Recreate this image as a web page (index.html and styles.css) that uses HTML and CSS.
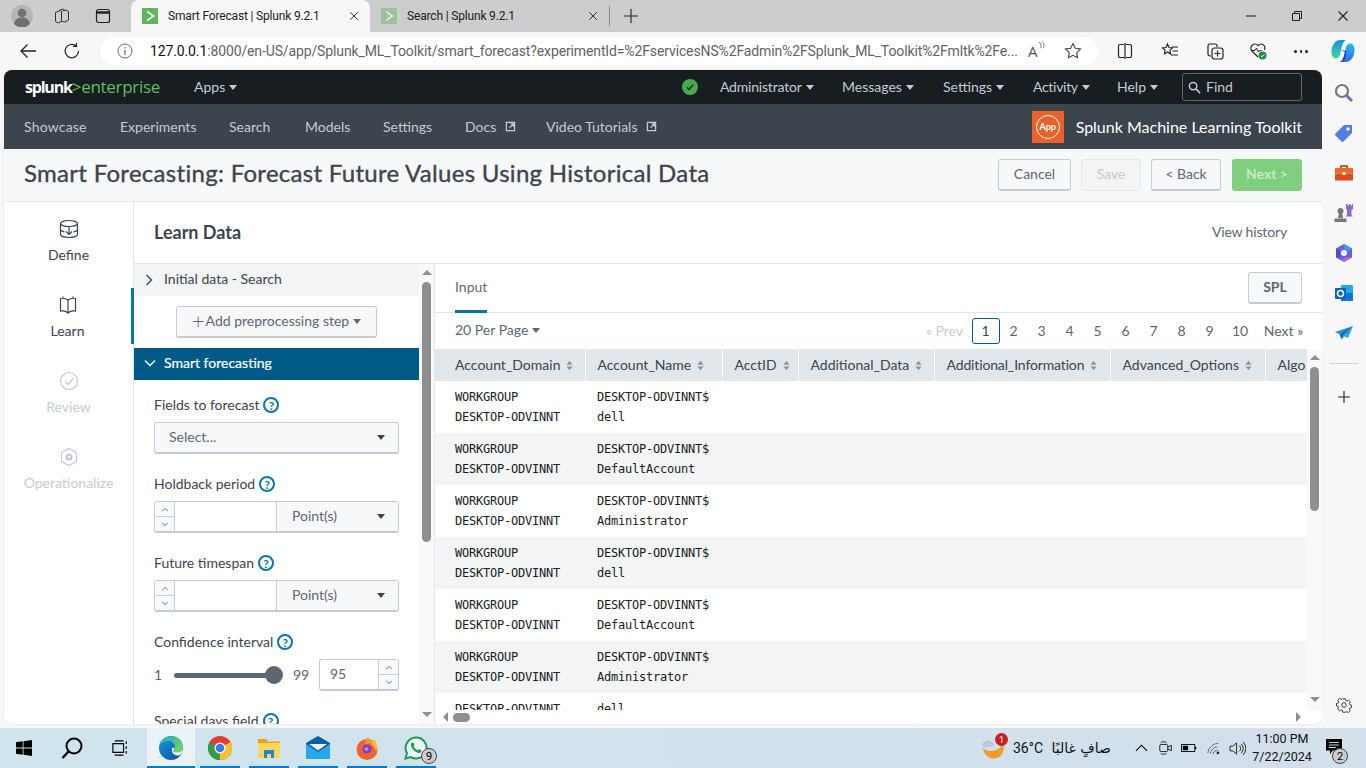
FILE: index.html
```html
<!DOCTYPE html>
<html lang="en">
<head>
<meta charset="utf-8">
<title>Smart Forecast | Splunk 9.2.1</title>
<link rel="stylesheet" href="styles.css">
</head>
<body>
<svg class="defs" width="0" height="0">
  <symbol id="sort" viewBox="0 0 8 12"><path d="M4 .5 7.5 5H.5zM4 11.5.5 7h7z" fill="#8a939c"/></symbol>
  <symbol id="ext" viewBox="0 0 12 12"><path d="M1.5 1.5h9v9h-9z M1.5 3.5v7h7" fill="none" stroke="#c3cbd4" stroke-width="1.3"/><path d="M5 7.5 9 3.2M6 3h3.2v3.2" fill="none" stroke="#c3cbd4" stroke-width="1.3"/></symbol>
  <symbol id="close" viewBox="0 0 12 12"><path d="M1.5 1.5l9 9M10.5 1.5l-9 9" stroke="#222" stroke-width="1.1" fill="none"/></symbol>
  <symbol id="fav" viewBox="0 0 16 16"><rect width="16" height="16" fill="#5cb85c"/><path d="M5 3.5 11.5 8 5 12.5" fill="none" stroke="#fff" stroke-width="1.8"/></symbol>
  <symbol id="up" viewBox="0 0 10 6"><path d="M1.5 5 5 1.5 8.500 5" fill="none" stroke="#6b7580" stroke-width="1.2"/></symbol>
  <symbol id="down" viewBox="0 0 10 6"><path d="M1.500 1 5 4.500 8.500 1" fill="none" stroke="#6b7580" stroke-width="1.2"/></symbol>
</svg>

<div class="tabbar">
  <div class="tb-left">
    <svg class="ic22" viewBox="0 0 22 22"><circle cx="11" cy="11" r="11" fill="#b5b5b5"/><circle cx="11" cy="8" r="4.300" fill="#6f6f6f"/><path d="M3 19c1-5 4-6.500 8-6.500s7 1.500 8 6.500a11 11 0 0 1-16 0" fill="#6f6f6f"/></svg>
    <svg class="ic16 gap-workspaces" viewBox="0 0 16 16"><path d="M1.500 4.500 6 2.500l1.500 1v10L4.500 15l-3-1.500z M5 2.500 9 1l1.500 1v.8 M8.500 3 12 2l2.500 1.500v8.500L11 14l-3.500-.5" fill="none" stroke="#333" stroke-width="1"/></svg>
    <svg class="ic16 gap-tabs" viewBox="0 0 16 16"><rect x="1.500" y="1.500" width="13" height="13" rx="2" fill="none" stroke="#222" stroke-width="1.200"/><path d="M1.500 4.500h13" stroke="#222" stroke-width="2.500"/></svg>
  </div>
  <div class="tab active">
    <svg class="fav" viewBox="0 0 16 16"><use href="#fav"/></svg>
    <span class="tab-title">Smart Forecast | Splunk 9.2.1</span>
    <svg class="tab-x" viewBox="0 0 12 12"><use href="#close"/></svg>
  </div>
  <div class="tab">
    <svg class="fav faded" viewBox="0 0 16 16"><use href="#fav"/></svg>
    <span class="tab-title">Search | Splunk 9.2.1</span>
    <svg class="tab-x" viewBox="0 0 12 12"><use href="#close"/></svg>
  </div>
  <span class="tab-sep"></span>
  <svg class="newtab" viewBox="0 0 14 14"><path d="M7 0v14M0 7h14" stroke="#222" stroke-width="1.100"/></svg>
  <div class="winctl">
    <svg class="wc" viewBox="0 0 12 12"><path d="M1 6h10" stroke="#222" stroke-width="1.100"/></svg>
    <svg class="wc" viewBox="0 0 12 12"><path d="M1.500 3.500h7v7h-7zM3.500 3.500v-2h7v7h-2" fill="none" stroke="#222" stroke-width="1"/></svg>
    <svg class="wc" viewBox="0 0 12 12"><use href="#close"/></svg>
  </div>
</div>

<div class="toolbar">
  <svg class="tool back" viewBox="0 0 18 18"><path d="M17 9H2M8.500 2.500 2 9l6.500 6.500" fill="none" stroke="#222" stroke-width="1.300"/></svg>
  <svg class="tool reload" viewBox="0 0 18 18"><path d="M15.500 9a6.700 6.700 0 1 1-2.300-5M13.500 1v3.500H10" fill="none" stroke="#222" stroke-width="1.200"/></svg>
  <div class="addr">
    <svg class="info" viewBox="0 0 16 16"><circle cx="8" cy="8" r="7" fill="none" stroke="#666" stroke-width="1"/><path d="M8 7v5M8 4v1.500" stroke="#666" stroke-width="1.200"/></svg>
    <span class="url"><b>127.0.0.1</b>:8000/en-US/app/Splunk_ML_Toolkit/smart_forecast?experimentId=%2FservicesNS%2Fadmin%2FSplunk_ML_Toolkit%2Fmltk%2Fe...</span>
    <span class="aloud">A<svg class="aloud-w" viewBox="0 0 8 10"><path d="M1 1c2.500 1 3 5 2 7M4 0c3 2 3.500 6 2 8" fill="none" stroke="#555" stroke-width=".9"/></svg></span>
    <svg class="star" viewBox="0 0 18 18"><path d="M9 1.500l2.300 4.800 5.200.7-3.800 3.600.9 5.200L9 13.300l-4.600 2.500.9-5.200L1.500 7l5.200-.7z" fill="none" stroke="#444" stroke-width="1.100"/></svg>
  </div>
  <div class="tools">
    <svg class="tool" viewBox="0 0 18 18"><path d="M8 2.500H4a1.500 1.500 0 0 0-1.500 1.500v10A1.500 1.500 0 0 0 4 15.500h4M10 2.500h4A1.500 1.500 0 0 1 15.500 4v10a1.500 1.500 0 0 1-1.500 1.500h-4M9 1v16" fill="none" stroke="#222" stroke-width="1.200"/></svg>
    <svg class="tool" viewBox="0 0 18 18"><path d="M6.500 2l1.500 3.500 3.500.4-2.600 2.500.7 3.600L6.500 10 3.400 11.900l.7-3.600L1.500 5.900 5 5.500z" fill="none" stroke="#222" stroke-width="1.100"/><path d="M11 5h6M11.500 9H17M10 13h7" stroke="#222" stroke-width="1.200"/></svg>
    <svg class="tool" viewBox="0 0 18 18"><path d="M5 14H4a2 2 0 0 1-2-2V4a2 2 0 0 1 2-2h5a2 2 0 0 1 2 2v1" fill="none" stroke="#222" stroke-width="1.200"/><rect x="6" y="6" width="11" height="11" rx="2.500" fill="none" stroke="#222" stroke-width="1.200"/><path d="M11.500 8.500v6M8.500 11.500h6" stroke="#222" stroke-width="1.200"/></svg>
    <svg class="tool t-health" viewBox="0 0 18 18"><path d="M9 15 2.500 8.500C.5 5.500 3 2 6 2c1.300 0 2.300.7 3 1.700C9.700 2.700 10.700 2 12 2c3 0 5 3.500 3.500 6" fill="none" stroke="#222" stroke-width="1.200"/><path d="M3 8.500h3l1.500-2.500 2 4 1-1.500h2" fill="none" stroke="#222" stroke-width="1"/><circle cx="13.500" cy="13.500" r="4" fill="#2a8a3e"/><path d="M11.700 13.500l1.300 1.300 2.300-2.500" fill="none" stroke="#fff" stroke-width="1"/></svg>
    <span class="dots"><i></i><i></i><i></i></span>
    <svg class="copilot" viewBox="0 0 24 24"><defs><linearGradient id="cpa" x1="0" y1="0" x2="0" y2="1"><stop offset="0" stop-color="#1a8fe0"/><stop offset="1" stop-color="#3fd8a0"/></linearGradient><linearGradient id="cpb" x1="0" y1="0" x2="0" y2="1"><stop offset="0" stop-color="#27b8f2"/><stop offset="1" stop-color="#2f6fe6"/></linearGradient></defs><path d="M9 1h6c-2.500 1-3.500 4-4.500 8L9 16c-.5 2-2.500 3.500-4.500 3.500C2 19.500.5 16.500.5 13 .5 7 4 1 9 1z" fill="url(#cpa)"/><path d="M15 23H9c2.500-1 3.500-4 4.500-8L15 8c.5-2 2.500-3.500 4.500-3.500 2.500 0 4 3 4 6.500 0 6-3.500 12-8.500 12z" fill="url(#cpb)"/><path d="M10 11l4 2-1 4c-.5 2-2 5-4 6 2 .3 4-1 5-3l1.500-8z" fill="#1b3fc0"/></svg>
  </div>
</div>

<div class="main">
  <div class="app">
    <header class="hdr">
      <div class="logo">splunk<span class="logo-g">&gt;enterprise</span></div>
      <span class="hm apps">Apps<i class="caret lt"></i></span>
      <div class="hdr-right">
        <svg class="ok" viewBox="0 0 16 16"><circle cx="8" cy="8" r="8" fill="#4aa84f"/><path d="M4.800 8.300 7 10.500l4.200-4.700" fill="none" stroke="#12301a" stroke-width="1.300"/></svg>
        <span class="hm m-admin">Administrator<i class="caret lt"></i></span>
        <span class="hm m-msg">Messages<i class="caret lt"></i></span>
        <span class="hm m-set">Settings<i class="caret lt"></i></span>
        <span class="hm m-act">Activity<i class="caret lt"></i></span>
        <span class="hm m-help">Help<i class="caret lt"></i></span>
        <div class="find"><svg class="find-i" viewBox="0 0 14 14"><circle cx="5.500" cy="5.500" r="4" fill="none" stroke="#c3cbd4" stroke-width="1.600"/><path d="M8.500 8.500 13 13" stroke="#c3cbd4" stroke-width="1.800"/></svg><span class="find-t">Find</span></div>
      </div>
    </header>
    <nav class="nav">
      <span class="ni n1">Showcase</span>
      <span class="ni n2">Experiments</span>
      <span class="ni n3">Search</span>
      <span class="ni n4">Models</span>
      <span class="ni n5">Settings</span>
      <span class="ni n6">Docs<svg class="ext" viewBox="0 0 12 12"><use href="#ext"/></svg></span>
      <span class="ni n7">Video Tutorials<svg class="ext" viewBox="0 0 12 12"><use href="#ext"/></svg></span>
      <div class="nav-right">
        <span class="appicon"><span class="appicon-in">App</span></span>
        <span class="apptitle">Splunk Machine Learning Toolkit</span>
      </div>
    </nav>
    <div class="titlebar">
      <h1 class="title">Smart Forecasting: Forecast Future Values Using Historical Data</h1>
      <div class="actions">
        <span class="btn b-cancel">Cancel</span>
        <span class="btn b-save">Save</span>
        <span class="btn b-back">&lt; Back</span>
        <span class="btn b-next">Next &gt;</span>
      </div>
    </div>
    <div class="body">
      <aside class="steps">
        <div class="step">
          <svg class="step-i" viewBox="0 0 20 20"><ellipse cx="10" cy="4.500" rx="8.500" ry="3" fill="none" stroke="#3c444d" stroke-width="1.200"/><path d="M1.500 4.500v11c0 1.700 3.800 3 8.500 3s8.500-1.300 8.500-3v-11M1.500 10c0 1.700 2 2.500 4 2.800M18.500 10c0 1.700-2 2.500-4 2.800M10 8v7M7 12.500l3 3 3-3" fill="none" stroke="#3c444d" stroke-width="1.200"/></svg>
          <span>Define</span>
        </div>
        <div class="step on">
          <svg class="step-i" viewBox="0 0 20 20"><path d="M10 5 C8 3.500 5 3 2.500 3.500V16c2.500-.5 5.500 0 7.500 2 2-2 5-2.500 7.500-2V3.500C15 3 12 3.500 10 5zM10 5v13M5 1.500v2M15 1.500v2" fill="none" stroke="#3c444d" stroke-width="1.200"/></svg>
          <span>Learn</span>
        </div>
        <div class="step off">
          <svg class="step-i" viewBox="0 0 20 20"><circle cx="10" cy="10" r="8.500" fill="none" stroke="#c3cbd4" stroke-width="1.200"/><path d="M6 10.500l3 3 5.500-6.500" fill="none" stroke="#c3cbd4" stroke-width="1.200"/></svg>
          <span>Review</span>
        </div>
        <div class="step off">
          <svg class="step-i" viewBox="0 0 20 20"><path d="M10 1.500l7.500 4.200v8.600L10 18.500l-7.500-4.200V5.700z" fill="none" stroke="#c3cbd4" stroke-width="1.200"/><circle cx="10" cy="10" r="3.500" fill="#c3cbd4"/><circle cx="10" cy="10" r="1.200" fill="#fff"/></svg>
          <span>Operationalize</span>
        </div>
      </aside>
      <section class="learn">
        <div class="learn-head">
          <h2 class="learn-title">Learn Data</h2>
          <span class="history">View history</span>
        </div>
        <div class="split">
          <div class="left">
            <div class="acc">
              <div class="acc-row"><svg class="chev" viewBox="0 0 8 12"><path d="M1.500 1 6.500 6l-5 5" fill="none" stroke="#3c444d" stroke-width="1.300"/></svg>Initial data - Search</div>
              <div class="add-wrap"><span class="add"><span class="plus">+</span>Add preprocessing step<i class="caret"></i></span></div>
              <div class="acc-row open"><svg class="chev wide" viewBox="0 0 12 8"><path d="M1 1.500l5 5 5-5" fill="none" stroke="#fff" stroke-width="1.300"/></svg>Smart forecasting</div>
              <div class="form">
                <div class="field">
                  <label class="lbl">Fields to forecast<span class="help">?</span></label>
                  <div class="sel"><span>Select...</span><i class="caret dk"></i></div>
                </div>
                <div class="field">
                  <label class="lbl">Holdback period<span class="help">?</span></label>
                  <div class="grp">
                    <span class="spin"><span class="sp"><svg viewBox="0 0 10 6"><use href="#up"/></svg></span><span class="sp"><svg viewBox="0 0 10 6"><use href="#down"/></svg></span></span>
                    <span class="inp"></span>
                    <span class="unit">Point(s)<i class="caret dk"></i></span>
                  </div>
                </div>
                <div class="field">
                  <label class="lbl">Future timespan<span class="help">?</span></label>
                  <div class="grp">
                    <span class="spin"><span class="sp"><svg viewBox="0 0 10 6"><use href="#up"/></svg></span><span class="sp"><svg viewBox="0 0 10 6"><use href="#down"/></svg></span></span>
                    <span class="inp"></span>
                    <span class="unit">Point(s)<i class="caret dk"></i></span>
                  </div>
                </div>
                <div class="field">
                  <label class="lbl">Confidence interval<span class="help">?</span></label>
                  <div class="slider-row">
                    <span class="s-min">1</span>
                    <span class="track"><span class="thumb"></span></span>
                    <span class="s-max">99</span>
                    <span class="grp num"><span class="numval">95</span><span class="spin r"><span class="sp"><svg viewBox="0 0 10 6"><use href="#up"/></svg></span><span class="sp"><svg viewBox="0 0 10 6"><use href="#down"/></svg></span></span></span>
                  </div>
                </div>
                <div class="field">
                  <label class="lbl">Special days field<span class="help">?</span></label>
                </div>
              </div>
            </div>
            <div class="vbar lbar"><i class="arr au"></i><span class="thumbv l"></span><span class="fill"></span><i class="arr ad"></i></div>
          </div>
          <div class="right">
            <div class="tabs">
              <span class="tab-input">Input</span>
              <span class="spl">SPL</span>
            </div>
            <div class="pager">
              <span class="perpage">20 Per Page<i class="caret"></i></span>
              <div class="pages">
                <span class="pg prev">« Prev</span>
                <span class="pg cur">1</span>
                <span class="pg">2</span><span class="pg">3</span><span class="pg">4</span><span class="pg">5</span><span class="pg">6</span><span class="pg">7</span><span class="pg">8</span><span class="pg">9</span>
                <span class="pg ten">10</span>
                <span class="pg nxt">Next »</span>
              </div>
            </div>
            <div class="tbl-area">
              <div class="tbl-clip">
                <table class="tbl">
                  <thead>
                    <tr>
                      <th class="c1">Account_Domain<svg class="sort" viewBox="0 0 8 12"><use href="#sort"/></svg></th>
                      <th class="c2">Account_Name<svg class="sort" viewBox="0 0 8 12"><use href="#sort"/></svg></th>
                      <th class="c3">AcctID<svg class="sort" viewBox="0 0 8 12"><use href="#sort"/></svg></th>
                      <th class="c4">Additional_Data<svg class="sort" viewBox="0 0 8 12"><use href="#sort"/></svg></th>
                      <th class="c5">Additional_Information<svg class="sort" viewBox="0 0 8 12"><use href="#sort"/></svg></th>
                      <th class="c6">Advanced_Options<svg class="sort" viewBox="0 0 8 12"><use href="#sort"/></svg></th>
                      <th class="c7">Algo</th>
                    </tr>
                  </thead>
                  <tbody>
                    <tr><td>WORKGROUP<br>DESKTOP-ODVINNT</td><td>DESKTOP-ODVINNT$<br>dell</td><td></td><td></td><td></td><td></td><td></td></tr>
                    <tr><td>WORKGROUP<br>DESKTOP-ODVINNT</td><td>DESKTOP-ODVINNT$<br>DefaultAccount</td><td></td><td></td><td></td><td></td><td></td></tr>
                    <tr><td>WORKGROUP<br>DESKTOP-ODVINNT</td><td>DESKTOP-ODVINNT$<br>Administrator</td><td></td><td></td><td></td><td></td><td></td></tr>
                    <tr><td>WORKGROUP<br>DESKTOP-ODVINNT</td><td>DESKTOP-ODVINNT$<br>dell</td><td></td><td></td><td></td><td></td><td></td></tr>
                    <tr><td>WORKGROUP<br>DESKTOP-ODVINNT</td><td>DESKTOP-ODVINNT$<br>DefaultAccount</td><td></td><td></td><td></td><td></td><td></td></tr>
                    <tr><td>WORKGROUP<br>DESKTOP-ODVINNT</td><td>DESKTOP-ODVINNT$<br>Administrator</td><td></td><td></td><td></td><td></td><td></td></tr>
                    <tr><td>DESKTOP-ODVINNT<br>&nbsp;</td><td>dell<br>&nbsp;</td><td></td><td></td><td></td><td></td><td></td></tr>
                  </tbody>
                </table>
              </div>
              <div class="vbar rbar"><i class="arr au"></i><span class="thumbv r"></span><span class="fill"></span><i class="arr ad"></i></div>
            </div>
            <div class="hbar"><i class="arr al"></i><span class="thumbh"></span><span class="fill"></span><i class="arr ar"></i></div>
          </div>
        </div>
      </section>
    </div>
  </div>
  <aside class="side">
    <svg class="sd" viewBox="0 0 20 20"><circle cx="8" cy="8" r="6" fill="none" stroke="#777" stroke-width="2.200"/><path d="M12.500 12.500 18 18" stroke="#8e5cc9" stroke-width="3"/></svg>
    <svg class="sd" viewBox="0 0 20 20"><path d="M18 2v8l-8.500 8.500a1.500 1.500 0 0 1-2 0L1.500 12.500a1.500 1.500 0 0 1 0-2L10 2z" fill="#4f80e1"/><circle cx="14" cy="6" r="1.700" fill="#fff"/></svg>
    <svg class="sd" viewBox="0 0 20 20"><path d="M7 5V3h6v2" fill="none" stroke="#9b3a14" stroke-width="1.600"/><rect x="1" y="5" width="18" height="5.500" fill="#ea6a2a"/><rect x="1" y="10.500" width="18" height="7" fill="#d84f1a"/><rect x="8.500" y="9" width="3" height="3" fill="#fff"/></svg>
    <svg class="sd" viewBox="0 0 20 20"><circle cx="6.500" cy="8" r="3" fill="#777"/><path d="M5 10h3l1 5H4zM.5 15.500h12V19H.5z" fill="#777"/><path d="M12 1h1.500v1.500h1.500V1h1.500v1.500H18V1h1v5l-1.500 1v5l1.500 1.500H11.500L13 12V7l-1-1z" fill="#8e6ac8"/></svg>
    <svg class="sd" viewBox="0 0 20 20"><path d="M10 1 18 5.500v9L10 19l-8-4.500v-9z" fill="#6a5fd8"/><path d="M10 1 18 5.500 14 8 10 6z" fill="#3b9be8"/><path d="M18 14.500 10 19l-3-2 7-3z" fill="#b86ad6"/><path d="M2 5.500 6 8v6l-4 .5z" fill="#4a4fc4"/><circle cx="10" cy="10" r="3" fill="#f5f5f5"/></svg>
    <svg class="sd" viewBox="0 0 20 20"><rect x="7" y="2" width="12" height="16" rx="1" fill="#28a8ea"/><path d="M7 10h12v8H7z" fill="#0f78d4"/><rect x="1" y="5" width="11" height="11" rx="1" fill="#0a64b4"/><circle cx="6.500" cy="10.500" r="3" fill="none" stroke="#fff" stroke-width="1.500"/></svg>
    <svg class="sd" viewBox="0 0 20 20"><path d="M19 3 1 9l5 2.500 1.500 5 3-3.500z" fill="#1f8fe0"/><path d="M19 3 6 11.500l1.500 5 1-4z" fill="#0c5fa8"/><path d="M19 3 8.500 12.500 14 15z" fill="#2c9fea"/></svg>
    <span class="side-div"></span>
    <svg class="sd-plus" viewBox="0 0 14 14"><path d="M7 1v12M1 7h12" stroke="#222" stroke-width="1.100"/></svg>
    <span class="fill"></span>
    <svg class="sd-gear" viewBox="0 0 24 24"><path d="M12 8.500a3.500 3.500 0 1 0 0 7 3.500 3.500 0 0 0 0-7zM10 2.500h4l.6 2.800 1.800.8 2.400-1.500 2.800 2.800-1.500 2.400.8 1.800 2.600.6v3.800l-2.600.6-.8 1.800 1.500 2.400-2.800 2.800-2.400-1.500-1.800.8L14 23h-4l-.6-2.800-1.800-.8-2.400 1.500-2.800-2.800 1.500-2.400-.8-1.800L.5 13.400V9.600l2.600-.6.800-1.800L2.400 4.800l2.800-2.800 2.400 1.500 1.800-.8z" fill="none" stroke="#222" stroke-width="1.300" transform="translate(1.500 1.500) scale(.875)"/></svg>
  </aside>
</div>

<footer class="taskbar">
  <div class="task-l">
    <span class="tk"><svg class="tki win" viewBox="0 0 16 16"><path d="M0 2.300 6.700 1.300V7.600H0zM7.500 1.200 16 0V7.600H7.500zM0 8.400H6.700V14.700L0 13.700zM7.500 8.400H16V16L7.500 14.800z" fill="#000"/></svg></span>
    <span class="tk"><svg class="tki search" viewBox="0 0 22 22"><circle cx="13" cy="9" r="7.500" fill="none" stroke="#000" stroke-width="2"/><path d="M7.500 14.500 1.500 21" stroke="#000" stroke-width="2.500"/></svg></span>
    <span class="tk"><svg class="tki tv" viewBox="0 0 18 18"><path d="M3 1h10M3 17h10M1 4h12v10H1z M16 1.500v3M16 7v3M16 12.500v3" fill="none" stroke="#000" stroke-width="1.300"/></svg></span>
    <span class="tk app-btn cur-app"><svg class="tka" viewBox="0 0 24 24"><defs><linearGradient id="ed" x1="0" y1="0" x2="1" y2="1"><stop offset="0" stop-color="#1fa8c9"/><stop offset="1" stop-color="#7fdc54"/></linearGradient><linearGradient id="edb" x1="0" y1="0" x2="1" y2="1"><stop offset="0" stop-color="#1a9ae0"/><stop offset="1" stop-color="#0a4f98"/></linearGradient></defs><circle cx="12" cy="12" r="12" fill="url(#edb)"/><path d="M13 12C12 17 16 21 21 19 23 17.500 24 15 24 13.500 22 16 17 17 15.500 15 14.500 13.800 15 12.500 16 11.500z" fill="#e8f2f7"/><path d="M.5 10C2 3.500 7 0 12.500 0 19 0 24 5 24 11.500c0 3-2.500 5-6 5-2.500 0-4-.8-4-1.500 0-1 2-1.500 2-4.500C16 7.500 13 5 9.500 5 5.500 5 2 7 .5 10z" fill="url(#ed)"/></svg></span>
    <span class="tk app-btn"><svg class="tka" viewBox="0 0 24 24"><circle cx="12" cy="12" r="12" fill="#e23d2e"/><path d="M12 12 22.400 6A12 12 0 0 1 12 24z" fill="#fbc02d"/><path d="M12 12 12 24A12 12 0 0 1 1.600 6z" fill="#2f9e44"/><circle cx="12" cy="12" r="5.500" fill="#fff"/><circle cx="12" cy="12" r="4.300" fill="#3b78e7"/></svg></span>
    <span class="tk app-btn"><svg class="tka" viewBox="0 0 24 24"><path d="M1 3h8l2 2.500h12V22H1z" fill="#e8a317"/><path d="M1 7h22v15H1z" fill="#fbd75b"/><path d="M7 14h10v8h-3v-4h-4v4H7z" fill="#2b83d3"/></svg></span>
    <span class="tk app-btn"><svg class="tka" viewBox="0 0 24 24"><path d="M12 0 24 7v15H0V7z" fill="#0a5ca8"/><path d="M0 8l12 8 12-8v15H0z" fill="#28a8ea"/><path d="M3 8h18l-9 6.500z" fill="#e6f3fb"/></svg></span>
    <span class="tk app-btn"><svg class="tka" viewBox="0 0 24 24"><circle cx="12" cy="13.500" r="10.500" fill="#f2622e"/><path d="M20 4c2 3 3 7 1 11-1-4-3-5-5-7-1-2 2-4 4-4z" fill="#ffc02e"/><path d="M13 1c1 3 4 4 6 7-3-1-6-1-9 0 0-3 1-5 3-7z" fill="#ff9a2e"/><circle cx="12" cy="13" r="4.500" fill="#7a3ec2"/><circle cx="11.500" cy="13" r="2" fill="#b486ea"/></svg></span>
    <span class="tk app-btn wa"><svg class="tka" viewBox="0 0 24 24"><path d="M12 1.500a10.500 10.500 0 0 0-9 15.700L1.500 22.500l5.400-1.400A10.500 10.500 0 1 0 12 1.500z" fill="#f0f6f3" stroke="#1d9b54" stroke-width="2"/><path d="M8 6.500c-1.500 1-1.500 3 0 5.500s4 4.500 6.500 5c2 .3 3-1 3-2.500l-2.500-1.500-1.300 1.200c-2-.8-3.500-2.400-4.200-4.200L10.500 9 9.300 6.500z" fill="#1d9b54"/></svg><span class="count">9</span></span>
  </div>
  <div class="task-r">
    <span class="weather"><svg class="wx" viewBox="0 0 24 24"><path d="M2 12c3 3 8 4 13 2 3-1 5-3 7-6 1 3 1 7-1 10-2 3-5 4.500-8.500 4.500C7 22.500 3 18 2 12z" fill="#f39a28"/><path d="M4 11c-2 0-3-1-3-2.500S3 6 4 6c1-2 5-2 6 0 2 0 3 1 3 2.500S11 11 10 11z" fill="#b7cbe0"/></svg><span class="wx-n">1</span></span>
    <span class="temp">36°C</span>
    <span class="arabic" lang="ar" dir="rtl">صافٍ غالبًا</span>
    <svg class="ti chevup" viewBox="0 0 14 8"><path d="M1 7l6-6 6 6" fill="none" stroke="#000" stroke-width="1.200"/></svg>
    <svg class="ti t-cam" viewBox="0 0 18 18"><path d="M3 3C4 1.500 8 1.500 9.500 3M3 15c1 1.500 5 1.500 6.500 0" fill="none" stroke="#222" stroke-width="1"/><rect x="2" y="5" width="9" height="8" rx="1.500" fill="none" stroke="#222" stroke-width="1.100"/><path d="M11 8l4-2v6l-4-2" fill="none" stroke="#222" stroke-width="1.100"/></svg>
    <svg class="ti t-bat" viewBox="0 0 18 10"><rect x=".5" y="1" width="15" height="8" fill="none" stroke="#000" stroke-width="1"/><rect x="2" y="2.500" width="6" height="5" fill="#000"/><path d="M16.500 3.500v3" stroke="#000" stroke-width="1.400"/></svg>
    <svg class="ti t-wifi" viewBox="0 0 16 14"><path d="M1 12A13 13 0 0 1 13 1M4 12.500A9 9 0 0 1 12 5M7 13a5 5 0 0 1 5-4" fill="none" stroke="#222" stroke-width="1" stroke-dasharray="2 .8"/><circle cx="12.500" cy="12" r="1.500" fill="#222"/></svg>
    <svg class="ti t-vol" viewBox="0 0 18 16"><path d="M1 5.500h3L8 2v12L4 10.500H1z" fill="none" stroke="#222" stroke-width="1"/><path d="M11 5a4 4 0 0 1 0 6M13 3a7 7 0 0 1 0 10M15 1a10 10 0 0 1 0 14" fill="none" stroke="#222" stroke-width="1"/></svg>
    <div class="clock"><span>11:00 PM</span><span>7/22/2024</span></div>
    <span class="notif"><svg class="notif-i" viewBox="0 0 16 16"><path d="M0 0h16v11.500H7L4 15v-3.500H0z" fill="#000"/><path d="M3 3.500h10M3 6h10M3 8.500h7" stroke="#fff" stroke-width=".8"/></svg><span class="count two">2</span></span>
  </div>
</footer>
</body>
</html>
```
FILE: styles.css
```css
* { box-sizing: border-box; }
html, body { margin: 0; padding: 0; height: 768px; overflow: hidden; }
body { width: 1366px; background: #f7f7f7; font-family: Lato, "Open Sans", sans-serif; color: #3c444d; display: flex; flex-direction: column; }
.defs { display: block; height: 0; }
i { font-style: normal; }
.fill { flex: 1; }

/* caret */
.caret { display: inline-block; width: 0; height: 0; border-left: 4px solid transparent; border-right: 4px solid transparent; border-top: 5px solid #5c6773; margin-left: 4px; vertical-align: 2px; }
.caret.lt { border-top-color: #c3cbd4; margin-left: 4px; }
.caret.dk { border-top-color: #3c444d; }

/* tab strip */
.tabbar { height: 32px; background: #cdcdcd; display: flex; align-items: flex-end; position: relative; font-family: Roboto, sans-serif; font-size: 12px; color: #222; }
.tb-left { width: 131px; height: 32px; padding-left: 11px; display: flex; align-items: center; flex: none; }
.ic22 { width: 22px; height: 22px; flex: none; }
.ic16 { width: 16px; height: 16px; flex: none; }
.gap-workspaces { margin-left: 21px; }
.gap-tabs { margin-left: 25px; }
.tab { width: 239px; height: 32px; padding: 0 11px; display: flex; align-items: center; flex: none; }
.tab.active { background: #f7f7f7; border-radius: 8px 8px 0 0; }
.fav { width: 16px; height: 16px; flex: none; }
.fav.faded { opacity: .45; }
.tab-title { margin-left: 10px; flex: 1; white-space: nowrap; overflow: hidden; letter-spacing: -.17px; }
.tab-x { width: 10px; height: 10px; flex: none; margin-right: 0; }
.tab-sep { width: 1px; height: 20px; background: #8a8a8a; margin: 0 0 6px 0; flex: none; }
.newtab { width: 14px; height: 14px; margin: 0 0 9px 14px; flex: none; }
.winctl { margin-left: auto; height: 32px; display: flex; align-items: center; padding-right: 17px; gap: 34px; }
.wc { width: 12px; height: 12px; }

/* toolbar */
.toolbar { height: 38px; background: #f7f7f7; display: flex; align-items: center; flex: none; }
.tool { width: 18px; height: 18px; flex: none; }
.back { margin-left: 19px; }
.reload { margin-left: 26px; }
.addr { width: 998px; height: 28px; margin-left: 19px; border-radius: 14px; background: #fff; display: flex; align-items: center; padding-left: 17px; flex: none; }
.info { width: 16px; height: 16px; flex: none; }
.url { margin-left: 17px; font-family: Roboto, sans-serif; font-size: 14px; color: #5f6368; white-space: nowrap; width: 866px; flex: none; letter-spacing: -.125px; }
.url b { font-weight: 400; color: #111; }
.aloud { margin-left: 12px; font-family: "Open Sans", sans-serif; font-size: 15px; color: #555; width: 20px; display: flex; align-items: flex-start; flex: none; }
.aloud-w { width: 7px; height: 9px; }
.star { width: 18px; height: 18px; margin-left: 16px; flex: none; }
.tools { display: flex; align-items: center; flex: none; margin-left: 18px; gap: 27px; }
.t-health { margin-left: -2px; }
.dots { display: flex; gap: 3px; width: 14px; }
.dots i { width: 3px; height: 3px; background: #222; border-radius: 50%; }
.copilot { width: 24px; height: 24px; margin-left: -4px; }

/* layout */
.main { height: 658px; display: flex; padding: 0 0 4px 4px; flex: none; }
.app { width: 1318px; height: 654px; border-radius: 8px; overflow: hidden; background: #fff; display: flex; flex-direction: column; flex: none; box-shadow: 0 0 1px #aaa; }
.hdr { height: 34px; background: #171d21; display: flex; align-items: center; padding-left: 21px; font-size: 14px; color: #c3cbd4; flex: none; }
.logo { width: 169px; font-size: 16px; font-weight: 700; color: #fff; letter-spacing: -1.200px; white-space: nowrap; font-family: "Open Sans", sans-serif; margin-top: -2px; }
.logo-g { color: #5cc05c; font-weight: 400; font-size: 17px; letter-spacing: -.3px; }
.hm { white-space: nowrap; margin-top: -2px; }
.hdr-right { margin-left: auto; display: flex; align-items: center; padding-right: 20px; }
.ok { width: 16px; height: 16px; }
.m-admin { margin-left: 22px; width: 122px; letter-spacing: -.2px; }
.m-msg { width: 101px; }
.m-set { width: 90px; }
.m-act { width: 84px; letter-spacing: -.3px; }
.m-help { width: 65px; }
.find { width: 120px; height: 28px; border: 1px solid #5c6773; border-radius: 3px; display: flex; align-items: center; padding-left: 5px; }
.find-t { margin-top: -2px; margin-left: -1px; }
.find-i { width: 13px; height: 13px; margin-right: 6px; }

.nav { height: 45px; background: #3c444d; display: flex; align-items: center; padding-left: 20px; padding-right: 20px; font-size: 14px; color: #c3cbd4; flex: none; }
.ni { white-space: nowrap; display: flex; align-items: center; }
.n1 { width: 96px; letter-spacing: .2px; }
.n2 { width: 109px; }
.n3 { width: 76px; }
.n4 { width: 77px; }
.n5 { width: 82px; margin-left: 1px; }
.n6 { width: 81px; }
.ext { width: 11px; height: 11px; margin-left: 9px; }
.nav-right { margin-left: auto; display: flex; align-items: center; }
.appicon { width: 32px; height: 32px; background: #e8622a; display: flex; align-items: center; justify-content: center; border: 1px solid #e8622a; margin-left: -1px; }
.appicon-in { width: 24px; height: 24px; border-radius: 50%; background: #e8622a; border: 1.500px solid #fff; color: #fff; font-size: 9px; font-weight: 700; display: flex; align-items: center; justify-content: center; }
.apptitle { margin-left: 12px; font-size: 16px; color: #fff; white-space: nowrap; }

.titlebar { height: 53px; background: #f7f8fa; border-bottom: 1px solid #e1e6eb; display: flex; align-items: center; padding: 0 20px; flex: none; }
.title { margin: -6px 0 0; font-size: 24px; font-weight: 400; letter-spacing: .29px; -webkit-text-stroke: .35px #3c444d; color: #3c444d; white-space: nowrap; }
.actions { margin-left: auto; display: flex; gap: 10px; margin-top: 0; }
.btn { height: 32px; border-radius: 3px; border: 1px solid #c3cbd4; border-bottom-width: 2px; background: #f7f8fa; font-size: 14px; color: #5c6773; display: flex; align-items: center; justify-content: center; padding-bottom: 3px; }
.b-cancel { width: 73px; }
.b-save { width: 60px; color: #c3cbd4; border-color: #e1e6eb; border-bottom-width: 1px; background: #f2f4f5; }
.b-back { width: 70px; }
.b-next { width: 70px; margin-left: 1px; background: #7fcf7e; border: 0; color: #c6ecc4; font-weight: 700; }

.body { flex: 1; min-height: 0; display: flex; }
.steps { width: 130px; flex: none; border-right: 1px solid #e1e6eb; padding-top: 10px; display: flex; flex-direction: column; gap: 20px; font-size: 14px; background: #fff; position: relative; }
.step { height: 56px; display: flex; flex-direction: column; align-items: center; color: #3c444d; margin-right: -1px; padding-right: 1px; padding-top: 7px; }
.step span { margin-top: 7px; line-height: 17px; }
.step.on { border-right: 3px solid #0877a6; margin-right: -1px; padding-right: 0; }
.step.off { color: #c3cbd4; }
.step-i { width: 20px; height: 20px; flex: none; }

.learn { flex: 1; min-width: 0; display: flex; flex-direction: column; }
.learn-head { height: 62px; border-bottom: 1px solid #e1e6eb; display: flex; align-items: center; justify-content: space-between; padding: 0 35px 2px 20px; flex: none; }
.learn-title { margin: 0; font-size: 18px; font-weight: 700; color: #3c444d; }
.history { font-size: 14px; color: #5c6773; letter-spacing: -.15px; }
.split { flex: 1; min-height: 0; display: flex; }

.left { width: 301px; flex: none; display: flex; border-right: 1px solid #e1e6eb; overflow: hidden; }
.acc { width: 285px; flex: none; overflow: hidden; font-size: 14px; }
.acc-row { height: 32px; background: #f2f4f5; display: flex; align-items: center; padding: 0 0 4px 11px; color: #3c444d; }
.chev { width: 8px; height: 12px; margin: 4px 11px 0 0; }
.chev.wide { width: 12px; height: 8px; margin: 2px 8px 0 -1px; }
.acc-row.open { background: #005a87; color: #fff; -webkit-text-stroke: .2px #fff; }
.add-wrap { height: 52px; display: flex; align-items: center; padding-left: 42px; }
.add { width: 201px; height: 32px; border: 1px solid #c3cbd4; border-bottom-width: 2px; border-radius: 3px; background: #f7f8fa; color: #5c6773; display: flex; align-items: center; justify-content: center; white-space: nowrap; padding-bottom: 2px; }
.add .caret { margin-top: 2px; vertical-align: 0; }
.plus { font-size: 22px; line-height: 1; margin-right: 1px; font-weight: 300; }
.form { padding: 15px 20px 0; }
.field { margin-bottom: 20px; }
.lbl { display: flex; align-items: center; height: 20px; margin-bottom: 7px; padding-bottom: 2px; color: #3c444d; white-space: nowrap; }
.help { width: 16px; height: 16px; border-radius: 50%; border: 2px solid #0877a6; color: #0877a6; font-size: 12px; font-weight: 700; display: flex; align-items: center; justify-content: center; margin: 2px 0 0 4px; flex: none; }
.sel { height: 32px; border: 1px solid #c3cbd4; border-bottom-width: 2px; border-radius: 3px; background: #f7f8fa; color: #5c6773; display: flex; align-items: center; justify-content: space-between; padding: 0 13px 2px 14px; }
.sel .caret { margin-top: 2px; }
.grp { height: 32px; border: 1px solid #c3cbd4; border-bottom-width: 2px; border-radius: 3px; background: #fff; display: flex; overflow: hidden; }
.spin { width: 20px; display: flex; flex-direction: column; border-right: 1px solid #c3cbd4; flex: none; }
.spin.r { border-right: 0; border-left: 1px solid #c3cbd4; margin-left: auto; }
.sp { flex: 1; background: #f7f8fa; display: flex; align-items: center; justify-content: center; }
.sp + .sp { border-top: 1px solid #c3cbd4; }
.sp svg { width: 8px; height: 5px; }
.inp { width: 101px; flex: none; }
.unit { flex: 1; border-left: 1px solid #c3cbd4; background: #f7f8fa; color: #5c6773; display: flex; align-items: center; justify-content: space-between; padding: 0 13px 2px 15px; }
.unit .caret { margin-top: 2px; }
.slider-row { height: 32px; display: flex; align-items: center; }
.s-min { width: 20px; color: #5c6773; margin: -2px 0 0 -1px; padding-left: 1px; }
.track { width: 100px; height: 5px; border-radius: 3px; background: #5c6773; display: flex; align-items: center; justify-content: flex-end; flex: none; margin-left: 1px; }
.thumb { width: 18px; height: 18px; border-radius: 50%; background: #5c6773; margin-right: -9px; flex: none; }
.s-max { margin: -2px 0 0 19px; width: 26px; color: #5c6773; }
.grp.num { width: 80px; flex: none; }
.numval { padding-left: 10px; color: #5c6773; line-height: 28px; }

.vbar { width: 15px; flex: none; display: flex; flex-direction: column; align-items: center; background: #f9f9f9; padding: 6px 0 7px; }
.rbar { padding-bottom: 8px; }
.thumbv { width: 9px; border-radius: 5px; background: #8f8f8f; flex: none; margin-top: 7px; }
.thumbv.l { height: 260px; }
.thumbv.r { height: 144px; }
.arr { width: 0; height: 0; display: block; flex: none; }
.au { border-left: 5px solid transparent; border-right: 5px solid transparent; border-bottom: 5px solid #8f8f8f; }
.ad { border-left: 5px solid transparent; border-right: 5px solid transparent; border-top: 5px solid #8f8f8f; }
.al { border-top: 5px solid transparent; border-bottom: 5px solid transparent; border-right: 5px solid #8f8f8f; }
.ar { border-top: 5px solid transparent; border-bottom: 5px solid transparent; border-left: 5px solid #8f8f8f; }

.right { flex: 1; min-width: 0; display: flex; flex-direction: column; font-size: 14px; }
.tabs { height: 49px; border-bottom: 1px solid #e1e6eb; display: flex; justify-content: space-between; align-items: flex-start; padding: 0 20px; flex: none; }
.tab-input { height: 49px; line-height: 46px; border-bottom: 3px solid #0877a6; color: #5c6773; }
.spl { width: 54px; height: 32px; margin-top: 8px; border: 1px solid #c3cbd4; border-bottom-width: 2px; border-radius: 3px; background: #f7f8fa; display: flex; align-items: center; justify-content: center; font-weight: 700; color: #5c6773; padding-bottom: 2px; }
.pager { height: 36px; display: flex; align-items: center; justify-content: space-between; padding: 0 19px 0 20px; flex: none; color: #5c6773; }
.perpage { margin-top: -3px; }
.pages { display: flex; align-items: center; }
.pg { width: 28px; height: 26px; display: flex; align-items: center; justify-content: center; padding: 0 1px 2px 0; }
.prev { width: 38px; margin-right: 8px; color: #c3cbd4; white-space: nowrap; }
.cur { border: 1px solid #005a87; border-radius: 3px; color: #3c444d; }
.ten { width: 31px; margin-left: 1px; }
.nxt { width: 38px; margin-left: 9px; white-space: nowrap; }
.tbl-area { flex: 1; min-height: 0; display: flex; }
.tbl-clip { flex: 1; min-width: 0; overflow: hidden; }
.tbl { border-collapse: collapse; table-layout: fixed; width: 1030px; }
.tbl th { height: 32px; background: #e1e6eb; border-right: 1px solid #fff; text-align: left; font-weight: 400; color: #3c444d; padding: 0 12px 2px 12px; white-space: nowrap; overflow: hidden; }
.tbl th.c1 { padding-left: 20px; }
.c1 { width: 150px; }
.c2 { width: 137px; }
.c3 { width: 76px; }
.c4 { width: 136px; }
.c5 { width: 176px; letter-spacing: -.14px; }
.c6 { width: 155px; }
.c7 { width: 200px; }
.sort { width: 7px; height: 11px; margin-left: 6px; vertical-align: -1px; }
.tbl td { height: 52px; padding: 6px 12px; font-family: "DejaVu Sans Mono", monospace; font-size: 12px; letter-spacing: -.22px; line-height: 20px; color: #171d21; vertical-align: top; white-space: nowrap; }
.tbl td:first-child { padding-left: 20px; }
.tbl tbody tr:nth-child(even) td { background: #f2f4f5; }
.hbar { height: 14px; flex: none; display: flex; align-items: center; padding: 0 21px 0 8px; background: #fff; }
.thumbh { width: 17px; height: 9px; border-radius: 5px; background: #8f8f8f; margin-left: 5px; }

/* browser sidebar */
.side { flex: 1; height: 654px; display: flex; flex-direction: column; align-items: center; padding-top: 13px; background: #f7f7f7; }
.sd { width: 20px; height: 20px; margin-bottom: 20px; flex: none; }
.side-div { width: 28px; height: 1px; background: #d0d0d0; margin-top: 0; flex: none; }
.sd-plus { width: 14px; height: 14px; margin-top: 26px; flex: none; }
.sd-gear { width: 18px; height: 18px; margin-bottom: 10px; flex: none; }

/* taskbar */
.taskbar { height: 40px; background: linear-gradient(90deg, #cfe5ee, #d3dfea); display: flex; justify-content: space-between; flex: none; font-family: Roboto, sans-serif; font-size: 12px; color: #111; }
.task-l { display: flex; }
.tk { width: 48px; height: 40px; display: flex; align-items: center; justify-content: center; flex: none; position: relative; }
.tki.win { width: 16px; height: 16px; }
.tki.search { width: 22px; height: 22px; }
.tki.tv { width: 16px; height: 16px; }
.app-btn { width: 40px; margin-right: 9px; border-bottom: 2px solid #0078d4; }
.cur-app { width: 48px; margin: 0 5px 0 3px; background: #e8f2f7; }
.tka { width: 24px; height: 24px; flex: none; margin-top: 1px; }
.count { position: absolute; width: 16px; height: 16px; right: -1px; bottom: 2px; border-radius: 50%; background: #ccc; border: 1px solid #444; color: #000; font-size: 11px; display: flex; align-items: center; justify-content: center; }
.task-r { display: flex; align-items: center; }
.weather { width: 24px; height: 24px; position: relative; flex: none; }
.wx { width: 24px; height: 24px; }
.wx-n { position: absolute; top: -3px; right: -3px; width: 13px; height: 13px; border-radius: 50%; background: #c9211e; color: #fff; font-size: 9px; display: flex; align-items: center; justify-content: center; }
.temp { margin-left: 8px; width: 30px; font-size: 14px; white-space: nowrap; }
.arabic { margin-left: 8px; font-family: "DejaVu Sans", sans-serif; font-size: 14px; white-space: nowrap; width: 60px; }
.ti { flex: none; }
.chevup { width: 13px; height: 8px; margin-left: 24px; }
.t-cam { width: 16px; height: 16px; margin-left: 10px; }
.t-bat { width: 16px; height: 10px; margin-left: 7px; }
.t-wifi { width: 14px; height: 13px; margin-left: 10px; }
.t-vol { width: 17px; height: 15px; margin-left: 8px; }
.clock { width: 60px; margin-left: 6px; display: flex; flex-direction: column; align-items: center; line-height: 18px; font-size: 12.500px; }
.notif { width: 50px; height: 40px; margin-left: 4px; position: relative; display: flex; align-items: center; justify-content: center; padding-right: 14px; }
.notif-i { width: 16px; height: 16px; margin-top: -2px; }
.count.two { right: 18px; bottom: 4px; }
```
